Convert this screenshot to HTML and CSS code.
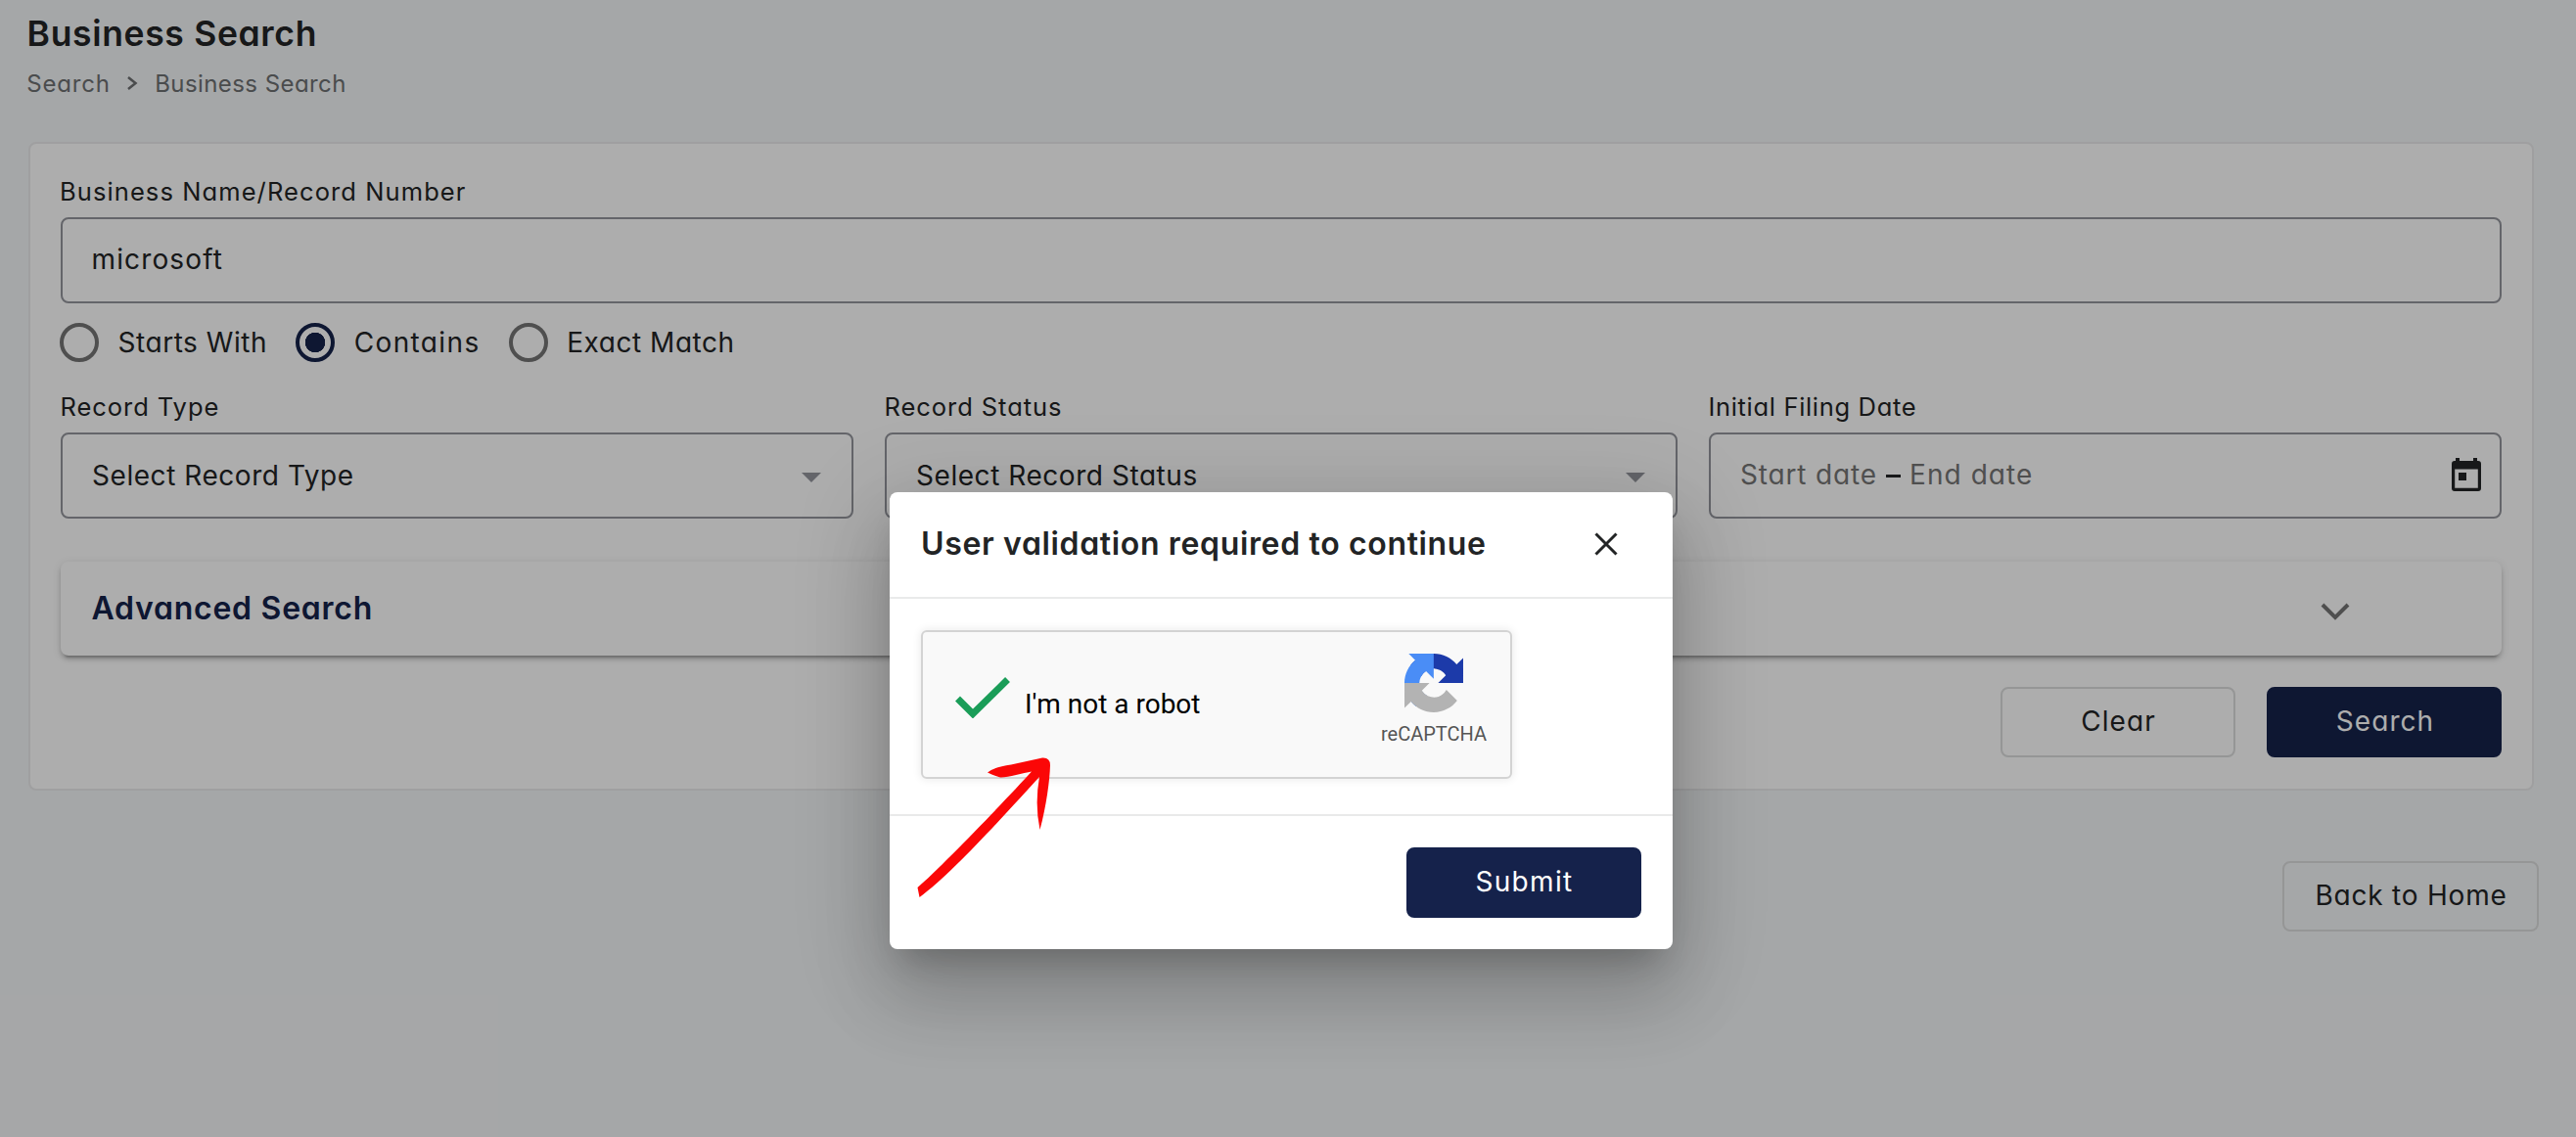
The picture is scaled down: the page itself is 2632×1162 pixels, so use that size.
FILE: index.html
```html
<!DOCTYPE html>
<html lang="en">
<head>
<meta charset="utf-8">
<title>Business Search</title>
<link rel="stylesheet" href="styles.css">
</head>
<body>
<main class="page">
  <h1 class="page-title">Business Search</h1>
  <nav class="breadcrumb">
    <span class="crumb-root">Search</span>
    <svg class="crumb-sep" viewBox="0 0 12 16"><path d="M2 2l7.500 6L2 14"/></svg>
    <span class="crumb-current">Business Search</span>
  </nav>

  <section class="card">
    <div class="label name-label">Business Name/Record Number</div>
    <div class="field"><span class="value">microsoft</span></div>
    <div class="radios">
      <div class="radio"><i class="dot"></i><span>Starts With</span></div>
      <div class="radio"><i class="dot checked"></i><span class="wide">Contains</span></div>
      <div class="radio"><i class="dot"></i><span>Exact Match</span></div>
    </div>
    <div class="filters">
      <div>
        <div class="label">Record Type</div>
        <div class="field"><span>Select Record Type</span><i class="caret"></i></div>
      </div>
      <div>
        <div class="label">Record Status</div>
        <div class="field"><span>Select Record Status</span><i class="caret"></i></div>
      </div>
      <div>
        <div class="label date-label">Initial Filing Date</div>
        <div class="field dates">
          <span class="start">Start date</span><i class="dash"></i><span class="end">End date</span>
          <svg class="calendar" viewBox="0 0 30 34"><path fill-rule="evenodd" d="M4 0h4v3h14V0h4v3h1a3 3 0 0 1 3 3v25a3 3 0 0 1-3 3H3a3 3 0 0 1-3-3V6a3 3 0 0 1 3-3h1zM3.200 11.500v19.300h23.600V11.500zM7 15h8v8H7z"/></svg>
        </div>
      </div>
    </div>
    <div class="panel">
      <span>Advanced Search</span>
      <svg class="chevron" viewBox="0 0 30 18"><path d="M2 2l13 13L28 2"/></svg>
    </div>
    <div class="actions">
      <button class="btn">Clear</button>
      <button class="btn primary">Search</button>
    </div>
  </section>

  <div class="footer"><button class="btn home">Back to Home</button></div>
</main>

<div class="backdrop"></div>
<div class="dialog">
  <header class="dialog-head">
    <span>User validation required to continue</span>
    <svg class="close" viewBox="0 0 24 24"><path d="M1.500 1.500l21 21M22.500 1.500l-21 21"/></svg>
  </header>
  <div class="dialog-body">
    <div class="captcha">
      <svg class="check" viewBox="0 0 56 42"><path d="M2.500 22L18 37.500 53.500 2.500"/></svg>
      <span class="robot">I'm not a robot</span>
      <div class="brand">
        <svg class="logo" viewBox="0 0 64 64">
          <path fill="#1c3aa9" d="M64 31.955l-.033-1.370V4.687l-7.160 7.160C50.948 4.674 42.033.093 32.050.093c-10.389 0-19.622 4.960-25.458 12.640l11.736 11.860a15.550 15.550 0 0 1 4.754-5.334c2.050-1.600 4.952-2.906 8.968-2.906.485 0 .86.057 1.135.163 4.976.393 9.288 3.140 11.828 7.124l-8.307 8.307L64 31.953"/>
          <path fill="#4a8df6" d="M31.862.094l-1.370.033H4.594l7.160 7.160C4.580 13.147 0 22.060 0 32.046c0 10.388 4.960 19.622 12.640 25.458L24.500 45.768a15.550 15.550 0 0 1-5.334-4.754c-1.600-2.050-2.906-4.952-2.906-8.968 0-.485.057-.860.163-1.135.393-4.976 3.140-9.288 7.124-11.828l8.307 8.307L31.860.095"/>
          <path fill="#b3b3b3" d="M.001 32.045l.033 1.370v25.898l7.160-7.160c5.860 7.173 14.774 11.754 24.760 11.754 10.388 0 19.622-4.960 25.458-12.640l-11.736-11.860a15.550 15.550 0 0 1-4.754 5.334c-2.050 1.600-4.952 2.906-8.968 2.906-.485 0-.860-.057-1.135-.163-4.976-.393-9.288-3.140-11.828-7.124l8.307-8.307L.001 32.045"/>
        </svg>
        <span>reCAPTCHA</span>
      </div>
    </div>
  </div>
  <footer class="dialog-foot"><button class="btn primary submit">Submit</button></footer>
  <svg class="pointer" viewBox="0 0 140 146"><path d="M0.500 133C24 113 93 41 117 14.500C108 16 92 21 85 20.500Q78 18.500 72 15.500Q80 9.500 96 7.500L128 0.500Q136 0 136 8C135.500 24 132 50 125.500 74Q120 48 125 20C100 47 37 118 2.500 143Z"/></svg>
</div>
</body>
</html>
```

FILE: styles.css
```css
* { box-sizing: border-box; }

body {
  margin: 0;
  width: 2632px;
  height: 1162px;
  overflow: hidden;
  position: relative;
  background: #f4f6f8;
  color: #222425;
  font-family: Inter, "Open Sans", sans-serif;
  font-feature-settings: "cv11", "ss03";
  font-size: 28px;
  letter-spacing: .550px;
  white-space: nowrap;
}

.page { padding: 0 38px 0 29px; }

.page-title {
  margin: 0 0 0 -1.400px;
  font-size: 35.500px;
  font-weight: 600;
  line-height: 70px;
  letter-spacing: .660px;
}

.breadcrumb {
  display: flex;
  align-items: center;
  height: 31px;
  margin: 0 0 44px -1.700px;
  font-size: 24px;
  line-height: 31px;
  color: #6e7072;
}

.crumb-root { letter-spacing: .780px; }
.crumb-current { letter-spacing: .430px; }
.crumb-sep { width: 12px; height: 16px; margin: -2px 17.500px 0 16px; fill: none; stroke: #6e7072; stroke-width: 2.500; }

.card {
  width: 2560px;
  padding: 33px 31px 32px;
  border: 2px solid #eaebec;
  border-radius: 8px;
  background: #fff;
}

.label {
  height: 32px;
  margin: 0 0 10px -.5px;
  font-size: 25.500px;
  line-height: 32px;
  letter-spacing: .940px;
}
.name-label { letter-spacing: 1.090px; margin-left: -1px; }
.date-label { letter-spacing: .670px; }

.field {
  display: flex;
  align-items: center;
  height: 88px;
  padding: 0 31px 0 30px;
  border: 2px solid #94969d;
  border-radius: 8px;
}
.field .value { margin-left: -.5px; padding-bottom: 2px; letter-spacing: 1.130px; }

.radios { display: flex; height: 40px; margin: 20px 0 30px -1px; }
.radio { display: flex; align-items: center; gap: 19.500px; height: 40px; margin-right: 29px; }
.wide { letter-spacing: 1.380px; }

.dot { width: 40px; height: 40px; border: 4px solid #757575; border-radius: 50%; }
.dot.checked { border-color: #15224b; background: radial-gradient(circle, #15224b 10px, transparent 10.500px); }

.filters { display: grid; grid-template-columns: repeat(3, 810px); gap: 32px; }

.caret {
  margin: 3px 0 0 auto;
  border: 10px solid transparent;
  border-top-color: #94969d;
  border-bottom: 0;
}

.dates span { color: #757575; padding-bottom: 2px; }
.start { letter-spacing: .850px; }
.end { letter-spacing: 1.060px; }
.dash { width: 15px; height: 3px; margin: 0 9px; background: #222425; }
.calendar { width: 30px; height: 34px; margin: -2px -12px 0 auto; fill: #222425; }

.panel {
  display: flex;
  align-items: center;
  justify-content: space-between;
  height: 96px;
  margin: 44px 0 32px;
  padding: 0 155px 0 31.500px;
  border-radius: 8px;
  font-size: 32px;
  font-weight: 600;
  letter-spacing: .750px;
  color: #15224b;
  box-shadow: 0 6px 2px -4px rgba(0, 0, 0, .2), 0 4px 4px rgba(0, 0, 0, .14), 0 2px 10px rgba(0, 0, 0, .12);
}
.panel span { padding-bottom: 2px; }

.chevron { width: 30px; height: 18px; margin-top: 5px; fill: none; stroke: #757575; stroke-width: 4; }

.actions { display: flex; justify-content: flex-end; gap: 32px; }

.btn {
  width: 240px;
  height: 72px;
  padding: 0 0 2px 1px;
  border: 2px solid #dcdddd;
  border-radius: 8px;
  background: none;
  color: #222425;
  font: inherit;
  font-feature-settings: inherit;
  letter-spacing: 1.050px;
}

.btn.primary { padding-left: 2px; border-color: #15224b; background: #15224b; color: #fff; }
.btn.submit { padding-left: 1px; letter-spacing: 1.340px; }
.btn.home { width: 262px; letter-spacing: .790px; }

.footer { display: flex; justify-content: flex-end; margin-top: 72px; }

.backdrop { position: absolute; inset: 0; background: rgba(0, 0, 0, .32); }

.dialog {
  position: absolute;
  left: 909px;
  top: 503px;
  width: 800px;
  height: 467px;
  border-radius: 8px;
  background: #fff;
  box-shadow: 0 22px 30px -14px rgba(0, 0, 0, .2), 0 48px 76px 6px rgba(0, 0, 0, .14), 0 18px 92px 16px rgba(0, 0, 0, .12);
}

.dialog-head {
  display: flex;
  align-items: center;
  justify-content: space-between;
  height: 109px;
  padding: 0 56px 2px 32px;
  border-bottom: 2px solid #e9eaea;
  font-size: 32px;
  font-weight: 600;
  letter-spacing: .650px;
}

.close { width: 24px; height: 24px; fill: none; stroke: #222425; stroke-width: 3; }

.dialog-body { padding: 32px 32px 36px; }

.captcha {
  display: flex;
  align-items: center;
  width: 604px;
  height: 152px;
  padding-left: 33px;
  border: 2px solid #d3d3d3;
  border-radius: 6px;
  background: #f9f9f9;
  box-shadow: 0 0 8px 1px rgba(0, 0, 0, .08);
  font-family: Roboto, sans-serif;
  font-feature-settings: normal;
  font-size: 28px;
  letter-spacing: 0;
  color: #000;
}

.check { width: 56px; height: 42px; margin: -14px 15px 0 0; fill: none; stroke: #1a9d58; stroke-width: 7; }
.robot { padding-bottom: 2px; }

.brand {
  display: flex;
  flex-direction: column;
  align-items: center;
  width: 108px;
  margin: -10px 24px 0 auto;
  font-size: 20px;
  line-height: 24px;
  color: #555;
}

.logo { width: 60px; height: 60px; margin-bottom: 10px; }

.dialog-foot {
  display: flex;
  justify-content: flex-end;
  padding: 32px;
  border-top: 2px solid #e9eaea;
}

.pointer { position: absolute; left: 28px; top: 271px; width: 140px; height: 146px; fill: #fb0707; }
```
